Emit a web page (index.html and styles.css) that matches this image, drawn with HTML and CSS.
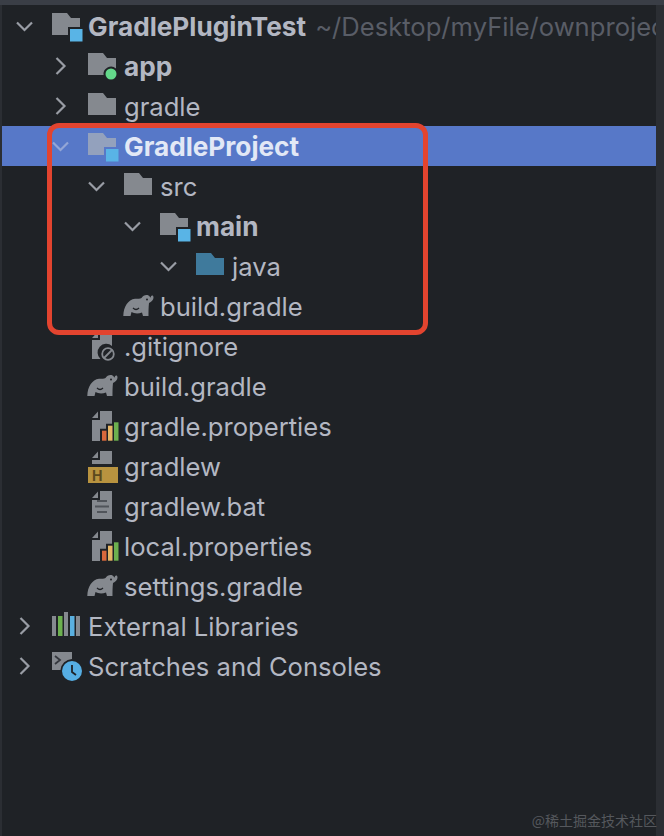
FILE: index.html
```html
<!DOCTYPE html>
<html lang="en">
<head>
    <meta charset="UTF-8">
    <meta name="viewport" content="width=device-width, initial-scale=1.0">
    <title>Project</title>
    <link rel="stylesheet" href="styles.css">
</head>
<body>
    <svg class="sprites" width="0" height="0">
        <symbol id="chev-down" viewBox="0 0 36 40"><path d="M11 16.500l7.500 7.500 7.500-7.500" fill="none" stroke="currentColor" stroke-width="2.200"/></symbol>
        <symbol id="chev-right" viewBox="0 0 36 40"><path d="M14.500 12l8 8-8 8" fill="none" stroke="currentColor" stroke-width="2.200"/></symbol>

        <symbol id="folder" viewBox="0 0 36 36"><path d="M4 5H19L23 10H32V27H4Z" fill="currentColor"/></symbol>
        <symbol id="folder-source" viewBox="0 0 36 36">
            <path d="M4 5H19L23 10H32V19H20V27H4Z" fill="currentColor"/>
            <rect x="22" y="21" width="12.500" height="12.500" fill="#59b4e6"/>
        </symbol>
        <symbol id="folder-app" viewBox="0 0 36 36">
            <path d="M4 5H19L23 10H32V20.400A7.500 7.500 0 0 0 19.600 27H4Z" fill="currentColor"/>
            <circle cx="27" cy="26" r="5.500" fill="#63d88a"/>
        </symbol>
        <symbol id="gradle" viewBox="0 0 36 36">
            <path d="M3.300 28C3.500 19 8 11.500 15 10.800C18 10.500 20 11 21.500 10C23 7.500 26 6.500 28.500 7.500C29.800 8.200 30 9.500 30.500 9.500C31 9.500 30.500 7.800 32 7.500C33.800 7.300 33.800 10 33 11.500C32 13.500 30 14.500 29 15C28.500 19 28.500 24 28.500 28H23L22 24.500C18 26 14 25.500 11.500 24L10.500 28Z" fill="currentColor"/>
            <path d="M13 20c1.800 1.800 4.200 1.800 6 0" fill="none" stroke="#1f2226" stroke-width="1.200"/>
            <circle cx="27" cy="11.500" r="1" fill="#1f2226"/>
        </symbol>
        <symbol id="file-ignore" viewBox="0 0 36 36">
            <path d="M14 3.500V10H8Z" fill="currentColor"/>
            <path d="M16 3H28V18A8.500 8.500 0 0 0 16.500 31H8V12H16Z" fill="currentColor"/>
            <circle cx="24" cy="26" r="5.800" fill="none" stroke="currentColor" stroke-width="1.800"/>
            <path d="M20 30L28 22" stroke="currentColor" stroke-width="1.800"/>
        </symbol>
        <symbol id="file-props" viewBox="0 0 36 36">
            <path d="M14 3.500V10H8Z" fill="currentColor"/>
            <path d="M16 3H28V15.700H22V20.700H16V33H8V12H16Z" fill="currentColor"/>
            <rect x="18" y="22.700" width="4.500" height="10" fill="#d9683c"/>
            <rect x="24" y="17.700" width="4.500" height="15" fill="#e6b566"/>
            <rect x="30" y="14.300" width="4.500" height="18.400" fill="#6cb04f"/>
        </symbol>
        <symbol id="file-shell" viewBox="0 0 36 36">
            <path d="M14 3.500V10H8Z" fill="currentColor"/>
            <path d="M16 3H28V16H8V12H16Z" fill="currentColor"/>
            <rect x="4" y="19" width="30" height="16" fill="#b8933f"/>
            <text x="8" y="33" class="shell-letter">H</text>
        </symbol>
        <symbol id="file-text" viewBox="0 0 36 36">
            <path d="M14 3.500V10H8Z" fill="currentColor"/>
            <path d="M16 3H28V31H8V12H16Z" fill="currentColor"/>
            <path d="M13 13H23M11 18.500H25M13 24H23" stroke="#50545a" stroke-width="1.800"/>
        </symbol>
        <symbol id="libraries" viewBox="0 0 36 36">
            <rect x="4" y="8" width="4" height="20" fill="currentColor"/>
            <rect x="10" y="8" width="4.500" height="20" fill="#6cb04f"/>
            <rect x="16" y="4" width="4" height="24" fill="currentColor"/>
            <rect x="22" y="8" width="4.500" height="20" fill="#5ab0e0"/>
            <rect x="28" y="8" width="4" height="20" fill="currentColor"/>
        </symbol>
        <symbol id="scratches" viewBox="0 0 36 36">
            <path d="M4 4H24V11A12 12 0 0 0 12.500 22H4Z" fill="currentColor"/>
            <path d="M7 8l5 4-5 4" fill="none" stroke="#34373d" stroke-width="1.800"/>
            <circle cx="24" cy="23" r="10" fill="#56aee3"/>
            <path d="M24 17V24L28 27" fill="none" stroke="#1f2226" stroke-width="1.800"/>
        </symbol>
    </svg>

    <div class="top-band"></div>
    <div class="tree">
        <div class="row depth-0">
            <svg class="chevron"><use href="#chev-down"/></svg>
            <svg class="icon"><use href="#folder-source"/></svg>
            <span class="name bold">GradlePluginTest</span>
            <span class="path">~/Desktop/myFile/ownproject</span>
        </div>
        <div class="row depth-1">
            <svg class="chevron"><use href="#chev-right"/></svg>
            <svg class="icon"><use href="#folder-app"/></svg>
            <span class="name bold">app</span>
        </div>
        <div class="row depth-1">
            <svg class="chevron"><use href="#chev-right"/></svg>
            <svg class="icon"><use href="#folder"/></svg>
            <span class="name">gradle</span>
        </div>
        <div class="row depth-1 selected">
            <svg class="chevron"><use href="#chev-down"/></svg>
            <svg class="icon"><use href="#folder-source"/></svg>
            <span class="name bold">GradleProject</span>
        </div>
        <div class="row depth-2">
            <svg class="chevron"><use href="#chev-down"/></svg>
            <svg class="icon"><use href="#folder"/></svg>
            <span class="name">src</span>
        </div>
        <div class="row depth-3">
            <svg class="chevron"><use href="#chev-down"/></svg>
            <svg class="icon"><use href="#folder-source"/></svg>
            <span class="name bold">main</span>
        </div>
        <div class="row depth-4">
            <svg class="chevron"><use href="#chev-down"/></svg>
            <svg class="icon java"><use href="#folder"/></svg>
            <span class="name">java</span>
        </div>
        <div class="row depth-2">
            <span class="chevron"></span>
            <svg class="icon"><use href="#gradle"/></svg>
            <span class="name">build.gradle</span>
        </div>
        <div class="row depth-1">
            <span class="chevron"></span>
            <svg class="icon"><use href="#file-ignore"/></svg>
            <span class="name">.gitignore</span>
        </div>
        <div class="row depth-1">
            <span class="chevron"></span>
            <svg class="icon"><use href="#gradle"/></svg>
            <span class="name">build.gradle</span>
        </div>
        <div class="row depth-1">
            <span class="chevron"></span>
            <svg class="icon"><use href="#file-props"/></svg>
            <span class="name">gradle.properties</span>
        </div>
        <div class="row depth-1">
            <span class="chevron"></span>
            <svg class="icon"><use href="#file-shell"/></svg>
            <span class="name">gradlew</span>
        </div>
        <div class="row depth-1">
            <span class="chevron"></span>
            <svg class="icon"><use href="#file-text"/></svg>
            <span class="name">gradlew.bat</span>
        </div>
        <div class="row depth-1">
            <span class="chevron"></span>
            <svg class="icon"><use href="#file-props"/></svg>
            <span class="name">local.properties</span>
        </div>
        <div class="row depth-1">
            <span class="chevron"></span>
            <svg class="icon"><use href="#gradle"/></svg>
            <span class="name">settings.gradle</span>
        </div>
        <div class="row depth-0">
            <svg class="chevron"><use href="#chev-right"/></svg>
            <svg class="icon"><use href="#libraries"/></svg>
            <span class="name">External Libraries</span>
        </div>
        <div class="row depth-0">
            <svg class="chevron"><use href="#chev-right"/></svg>
            <svg class="icon"><use href="#scratches"/></svg>
            <span class="name">Scratches and Consoles</span>
        </div>
    </div>

    <div class="highlight"></div>
    <div class="watermark">@稀土掘金技术社区</div>
</body>
</html>
```

FILE: styles.css
```css
html, body {
    height: 100%;
}
body {
    margin: 0;
    background-color: #1f2226;
    font-family: Inter, "Noto Sans", sans-serif;
    font-size: 25.600px;
    color: #b3b7c2;
    display: flex;
    flex-direction: column;
    overflow: hidden;
    position: relative;
}
.sprites {
    position: absolute;
}
.top-band {
    height: 5px;
    flex-shrink: 0;
    background-color: #3a3e46;
}
.tree {
    flex: 1;
    padding-top: 1px;
    border-left: 2px solid #2b2e33;
    border-right: 8px solid #2b2e33;
}
.row {
    height: 40px;
    display: flex;
    align-items: center;
    white-space: nowrap;
    overflow: hidden;
}
.depth-0 { padding-left: 4px; }
.depth-1 { padding-left: 40px; }
.depth-2 { padding-left: 76px; }
.depth-3 { padding-left: 112px; }
.depth-4 { padding-left: 148px; }
.chevron {
    flex: 0 0 36px;
    width: 36px;
    height: 40px;
    color: #999da5;
}
.icon {
    flex: 0 0 36px;
    width: 36px;
    height: 36px;
    margin-left: 6px;
    margin-right: 4px;
    color: #85898f;
}
.icon.java {
    color: #3f7a9c;
}
.name.bold {
    font-size: 26.200px;
    font-weight: 700;
}
.path {
    margin-left: 9px;
    color: #595d66;
}
.selected {
    background-color: #5778c8;
}
.selected .name {
    color: #e2e8f6;
}
.selected .chevron {
    color: #93a6d6;
}
.selected .icon {
    color: #93a1bd;
}
.shell-letter {
    font-size: 14px;
    font-weight: 700;
    fill: #5c4a1e;
}
.highlight {
    position: absolute;
    left: 47px;
    top: 123px;
    width: 381px;
    height: 212px;
    box-sizing: border-box;
    border: 5px solid #e2442f;
    border-radius: 12px;
}
.watermark {
    position: absolute;
    right: 7px;
    bottom: 6px;
    font-family: "Noto Sans CJK SC", sans-serif;
    font-size: 14px;
    color: #55585d;
}
```
